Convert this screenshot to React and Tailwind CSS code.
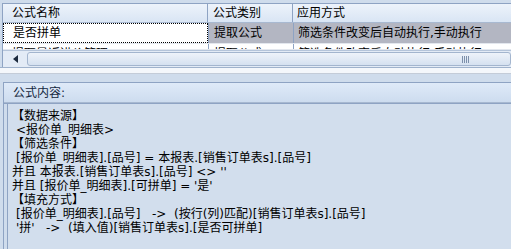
import React from 'react';

const rows = [
    { name: '是否拼单', kind: '提取公式', mode: '筛选条件改变后自动执行,手动执行', selected: true },
    { name: '提取最近进价管理', kind: '提取公式', mode: '筛选条件改变后自动执行,手动执行' },
];

// indent: the line is pushed in by one space width
const lines = [
    { text: '【数据来源】' },
    { text: '<报价单_明细表>', indent: true },
    { text: '【筛选条件】' },
    { text: '[报价单_明细表].[品号] = 本报表.[销售订单表s].[品号]', indent: true },
    { text: '并且 本报表.[销售订单表s].[品号] <> \'\'' },
    { text: '并且 [报价单_明细表].[可拼单] = \'是\'' },
    { text: '【填充方式】' },
    { text: '[报价单_明细表].[品号]   ->  (按行(列)匹配)[销售订单表s].[品号]', indent: true },
    { text: "'拼'   ->  (填入值)[销售订单表s].[是否可拼单]", indent: true },
];

const App = () => {
    return (
        <div className="w-[511px] h-[249px] overflow-hidden bg-[#cfdcec] pt-[3px] flex flex-col text-[12px] leading-[16px] text-black font-['DejaVu_Sans','Noto_Sans_CJK_SC',sans-serif]">
            {/* formula grid */}
            <div className="ml-[2px] h-[64px] shrink-0 flex flex-col border-l border-t border-[#8ea3c3] bg-white">
                <div className="h-[19px] shrink-0 flex border-b border-[#a8b9d1] bg-gradient-to-b from-[#edf3fb] to-[#d9e5f4]">
                    <div className="w-[205px] pl-[9px] flex items-center border-r border-[#8ea3c3]">公式名称</div>
                    <div className="w-[85px] pl-[5px] flex items-center border-r border-[#8ea3c3]">公式类别</div>
                    <div className="flex-1 pl-[4px] flex items-center">应用方式</div>
                </div>
                {rows.map((row, i) => (
                    <div key={i} className={`shrink-0 flex border-b border-[#e3e7ee] ${i === 0 ? 'h-[21px]' : 'h-[6px] overflow-hidden items-start'}`}>
                        <div className={`w-[205px] pl-[9px] flex items-center ${row.selected ? 'bg-white border border-dotted border-black pl-[8px]' : 'h-[20px]'}`}>{row.name}</div>
                        <div className={`w-[85px] pl-[5px] flex items-center border-l border-[#8ea3c3] ${row.selected ? 'bg-[#b3b6c2]' : 'h-[20px]'}`}>{row.kind}</div>
                        <div className={`flex-1 pl-[4px] flex items-center border-l border-[#8ea3c3] ${row.selected ? 'bg-[#b3b6c2]' : 'h-[20px]'}`}>{row.mode}</div>
                    </div>
                ))}
                <div className="h-[17px] shrink-0 flex bg-[#e3ebf6] border-t border-[#b4c4da]">
                    <div className="w-[24px] flex items-center justify-center">
                        <svg width="5" height="8" viewBox="0 0 5 8"><path d="M5 0 L0 4 L5 8 Z" fill="#1b2a3e" /></svg>
                    </div>
                    <div className="flex-1 my-[1px] rounded-[3px] border border-[#a3b5ce] bg-gradient-to-b from-[#eef3fa] to-[#d5e1f0] flex items-center justify-end pr-[41px]">
                        <div className="flex gap-[1px]">
                            <div className="w-[1px] h-[7px] bg-[#7d90ab]" />
                            <div className="w-[1px] h-[7px] bg-[#7d90ab]" />
                            <div className="w-[1px] h-[7px] bg-[#7d90ab]" />
                            <div className="w-[1px] h-[7px] bg-[#7d90ab]" />
                        </div>
                    </div>
                </div>
            </div>

            {/* splitter */}
            <div className="h-[7px] shrink-0 bg-[#f4f7fb] border-t border-[#9fb2cc] border-b border-b-[#c4ccd8]" />
            <div className="h-[8px] shrink-0" />

            {/* formula content panel */}
            <div className="ml-[3px] flex-1 flex flex-col border-l border-t border-[#8ea3c3]">
                <div className="h-[19px] shrink-0 flex items-center pl-[9px] bg-gradient-to-b from-[#dfeaf8] to-[#cddcef] text-[#15283f]">公式内容:</div>
                <div className="h-[1px] shrink-0 bg-[#a7b8d0]" />
                <div className="h-[1px] shrink-0 bg-[#8ea3c3]" />
                <div className="flex-1 ml-[3px] border-l border-[#8ea3c3] bg-[#d2deed] pt-[5px] pl-[4px]">
                    {lines.map((line, i) => (
                        <div key={i} className={`h-[14px] whitespace-pre leading-[14px] ${line.indent ? 'pl-[4px]' : ''}`}>{line.text}</div>
                    ))}
                </div>
            </div>
        </div>
    );
};

export default App;
